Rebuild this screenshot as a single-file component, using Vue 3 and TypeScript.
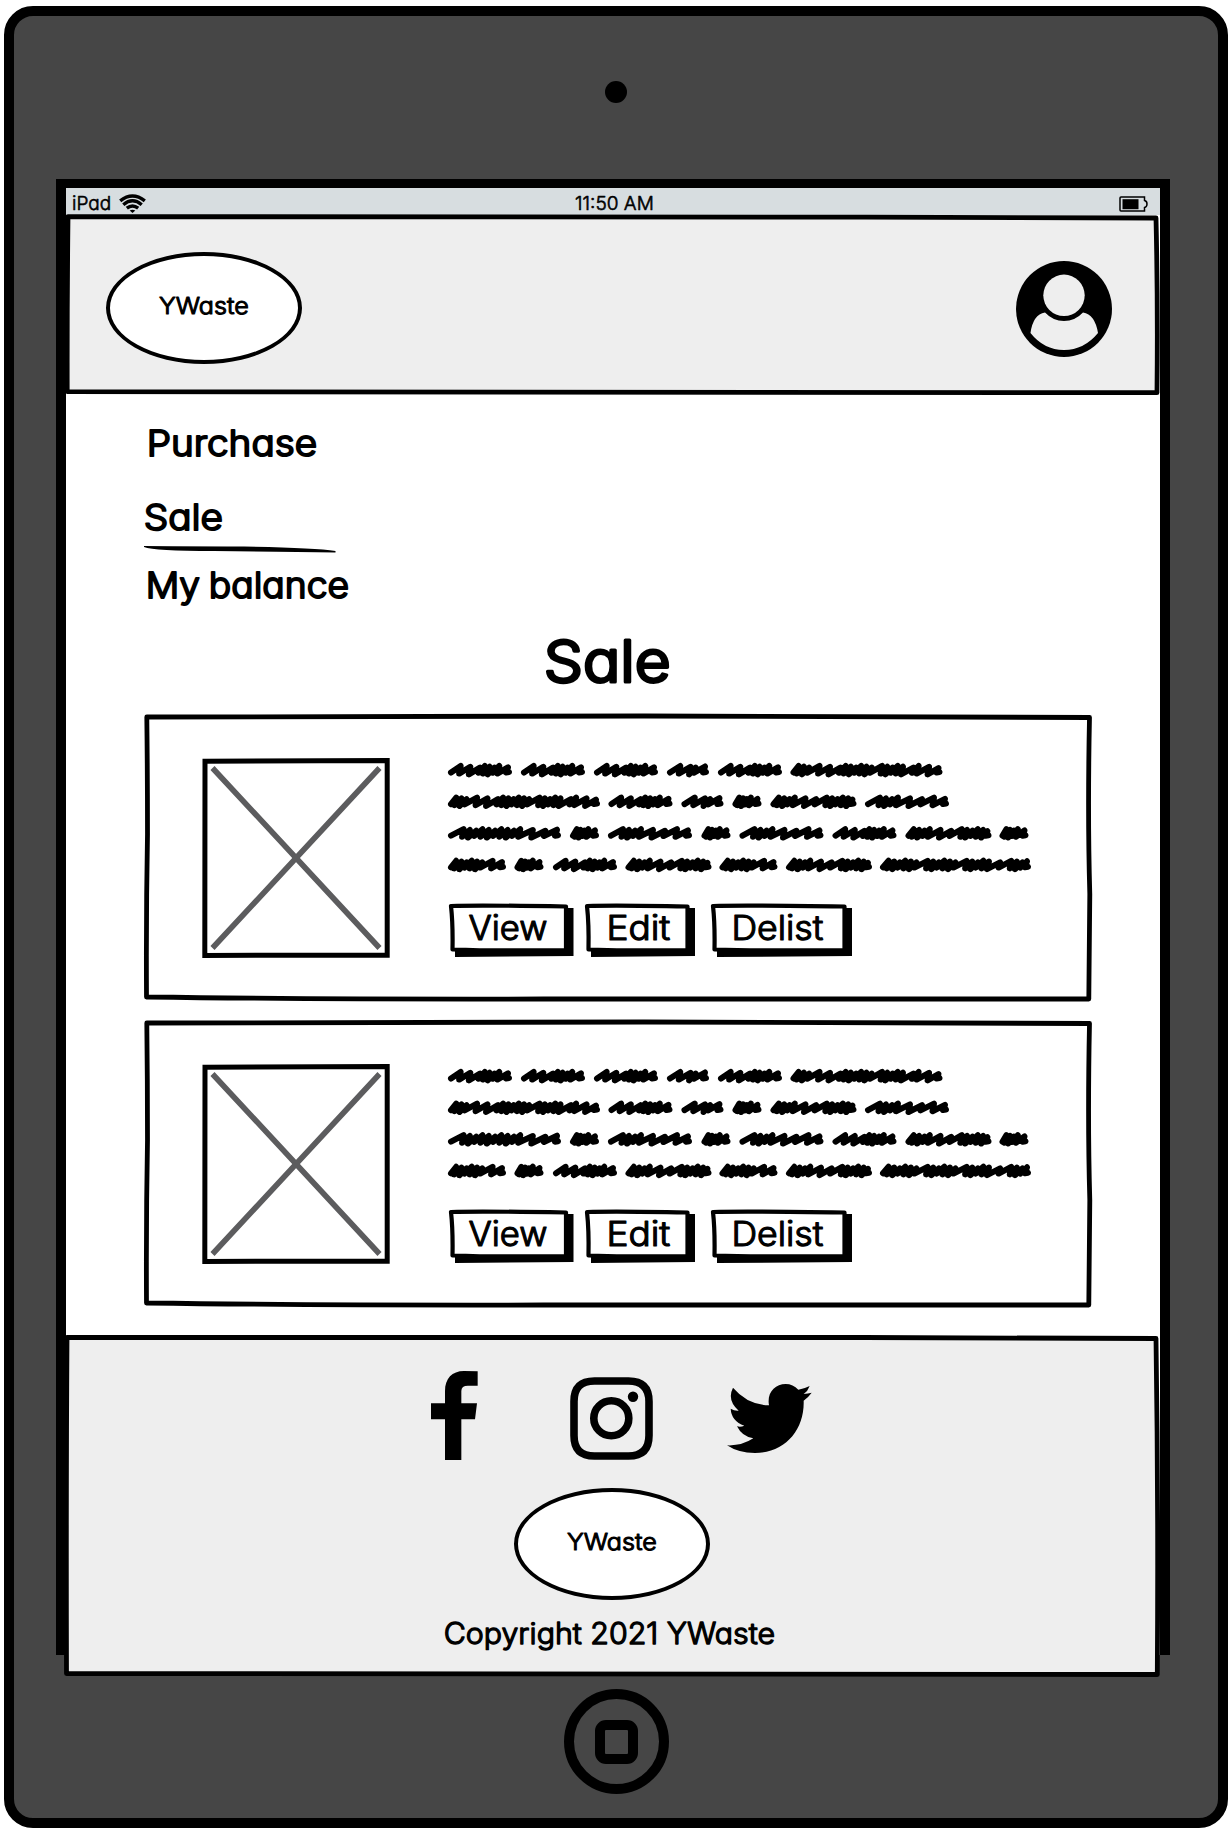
<script setup lang="ts">
import { h } from 'vue'
import type { FunctionalComponent } from 'vue'

interface LetteringProps {
  text: string
  size: number
  width: number
  ink: number
}

// A line of marker lettering: its box is the cap height by the inked width.
// A light face under a round-joined stroke gives the soft pen ends.
const Lettering: FunctionalComponent<LetteringProps> = (props) => {
  const cap = props.size * 0.727
  const fontSize = (cap - props.ink) / 0.727
  const bearing = fontSize * 0.065 - props.ink / 2
  return h(
    'svg',
    {
      width: props.width,
      height: Math.round(cap),
      style: 'display:block;overflow:visible;flex:none',
    },
    [
      h(
        'text',
        {
          x: -bearing,
          y: Math.round(cap) - props.ink / 2,
          'font-size': fontSize,
          textLength: props.width + bearing * 1.8,
          lengthAdjust: 'spacingAndGlyphs',
          fill: '#000',
          stroke: '#000',
          'stroke-width': props.ink,
          'stroke-linejoin': 'round',
        },
        props.text,
      ),
    ],
  )
}
Lettering.props = ['text', 'size', 'width', 'ink']

// Scribbled words: w is an open slash, n a tight one.
type Word = [x: number, width: number, shape: string]

const A = 'wwwnnnnw'
const B = 'wwnw'
const C = 'nnnwwwnnnnnnwnnnnwnww'
const D = 'nnnnw'
const E = 'nnnnwwwnnnnn'
const F = 'wnnnwwww'
const G = 'wnnnnnnnnnwww'
const H = 'nnnnnnww'
const L = 'nnnnnnwnnnnnwnnnnwwnnn'

const lines: Word[][] = [
  [[0, 64, A], [73, 64, A], [146, 64, A], [219, 42, B], [270, 64, A], [342.5, 152, C]],
  [[0, 152, C], [160.5, 64, A], [233.5, 42, B], [284.5, 29, D], [322.5, 86, E], [417, 84, F]],
  [[0, 113, G], [122, 29, D], [160, 84, F], [253.5, 29, D], [291.5, 84, F], [384.5, 64, A], [457.5, 86, E], [551.5, 29, D]],
  [[0, 58, H], [66.5, 29, D], [105, 64, A], [177.5, 86, E], [271.5, 58, H], [338, 86, E], [432, 151, L]],
]

function scribble([x, width, shape]: Word, row: number): string {
  const units = [...shape].map((c) => (c === 'w' ? 10 : 5))
  const total = units.reduce((sum, u) => sum + u, 0)
  const scale = (width - 6) / total
  const base = 7 + row * 31.6
  let cursor = x + 3
  let d = `M${cursor} ${base + 2.5}`
  units.forEach((unit, i) => {
    const step = unit * scale
    const top = base - 4 + (i % 3) * 0.8
    const bottom = base + 2.8 + ((i + 1) % 3) * 0.8
    cursor += step
    if (i === units.length - 1) {
      d += `L${cursor - 1} ${top + 0.5}L${cursor - 3} ${base + 2.5}L${cursor} ${base + 2}`
    } else {
      d += `L${cursor} ${top}L${cursor - (unit > 5 ? 1.5 : 2)} ${bottom}`
    }
  })
  return d
}

const scribbles: string[] = lines.flatMap((line, row) => line.map((word) => scribble(word, row)))

const listings = [{ id: 1 }, { id: 2 }]
const actions = [
  { label: 'View', box: 119.5, width: 76, gap: 16.5, pad: 21 },
  { label: 'Edit', box: 105, width: 61, gap: 20.5, pad: 22.5 },
  { label: 'Delist', box: 136, width: 89, gap: 0, pad: 22.5 },
]
</script>

<template>
  <div class="device">
    <div class="camera"></div>
    <div class="screen">
      <div class="status">
        <div class="carrier">
          <Lettering text="iPad" :size="20" :width="37.500" :ink="0.6" />
          <svg class="wifi" viewBox="0 0 27 19" width="27" height="19">
            <g fill="none" stroke="#000" stroke-width="3.400">
              <path d="M1.2 6.8Q13.5-3 25.8 6.8" />
              <path d="M4.3 10.700Q13.5 3 22.7 10.700" />
              <path d="M7.8 14.200Q13.5 9.700 19.2 14.200" />
            </g>
            <path d="M10.7 16.500Q13.5 15 16.3 16.500L13.5 19Z" />
          </svg>
        </div>
        <Lettering class="clock" text="11:50 AM" :size="20" :width="77" :ink="0.6" />
        <div class="power">
          <svg viewBox="0 0 29 16" width="29" height="16">
            <path d="M2 1H25.5V4.5Q28 5 28 8T25.5 11.5V15H2Q1 15 1 14V2Q1 1 2 1Z" fill="none" stroke="#000" stroke-width="1.5" />
            <rect x="3.5" y="3.2" width="16" height="10" />
          </svg>
        </div>
      </div>

      <header class="topbar">
        <svg class="outline" width="1094" height="180" viewBox="0 0 1094 180">
          <path d="M2 1.600Q400 2.500 800 2.200L1090 3Q1092 90 1091 177.700Q540 178.800 1.200 176.600Q1 90 2 1.600Z" />
        </svg>
        <div class="logo"><Lettering text="YWaste" :size="25" :width="88" :ink="1.100" /></div>
        <svg class="avatar" viewBox="0 0 96 96" width="96" height="96">
          <circle cx="48" cy="48" r="48" />
          <g fill="#eee">
            <circle cx="48" cy="34.3" r="20.7" />
            <path d="M14.500 72Q17 53.500 29 51.500Q37 60 48 60T67 51.500Q79 53.500 82 72Q68 89 48 89T14.500 72Z" />
          </g>
        </svg>
      </header>

      <main class="content">
        <nav class="menu">
          <Lettering class="purchase" text="Purchase" :size="38" :width="168" :ink="1.900" />
          <Lettering class="sale" text="Sale" :size="38" :width="77" :ink="1.900" />
          <svg class="underline" width="192" height="8" viewBox="0 0 192 8">
            <path d="M0 0Q30 .2 100 .5Q170 1.500 191.500 5L191.500 6.500Q140 6 70 5Q10 5 0 1Z" />
          </svg>
          <Lettering class="balance" text="My balance" :size="38" :width="201" :ink="1.900" />
        </nav>

        <h1 class="title"><Lettering text="Sale" :size="62" :width="123" :ink="3.200" /></h1>

        <section class="cards">
          <article v-for="item in listings" :key="item.id" class="card">
            <svg class="outline" width="948" height="288" viewBox="0 0 948 288">
              <path d="M2.800 3Q300 2 500 2Q750 2.500 945.500 3.500Q943.500 100 945.800 180L944.800 285Q600 286 400 285Q180 285.500 2.500 283Q2 200 3.500 120Q3.500 60 2.800 3Z" />
            </svg>
            <svg class="photo" width="188" height="200" viewBox="0 0 188 200">
              <path d="M10.500 10L177.500 190M177.500 10L10.500 190" fill="none" stroke="#5c5c5e" stroke-width="5.600" />
              <path d="M3 3.200L185.200 2.600V197.200L2.800 197.400Z" fill="none" stroke="#000" stroke-width="5" />
            </svg>
            <div class="details">
              <svg class="scribbles" width="584" height="112" viewBox="0 0 584 112">
                <path v-for="(d, i) in scribbles" :key="i" :d="d" />
              </svg>
              <div class="actions">
                <button
                  v-for="action in actions"
                  :key="action.label"
                  type="button"
                  class="action"
                  :style="{ width: action.box + 'px', marginRight: action.gap + 'px', paddingLeft: action.pad + 'px' }"
                >
                  <svg class="outline" :width="action.box" height="50" :viewBox="`0 0 ${action.box} 50`">
                    <path :d="`M6 4H${action.box + 5}V52L6 53V47H${action.box - 4}V4Z`" fill="#000" stroke="none" />
                    <path
                      :d="`M2 2Q30 1 ${action.box - 2.5} 2.5V46Q50 47 3.500 45.5Q4 20 2 2Z`"
                      fill="#fff"
                      stroke-width="4.200"
                    />
                  </svg>
                  <Lettering class="caption" :text="action.label" :size="36" :width="action.width" :ink="1.200" />
                </button>
              </div>
            </div>
          </article>
        </section>
      </main>

      <footer class="footer">
        <svg class="outline" width="1096" height="341" viewBox="0 0 1096 341">
          <path d="M3 1.500Q500 2 800 1.500L1092 2.500Q1094.500 170 1093.300 338.500Q540 340 2.500 337.500Q2 160 3 1.500Z" />
        </svg>
        <div class="socials">
          <svg class="facebook" viewBox="63 62 141 267" width="47" height="89">
            <path d="M105 329V207H63V159H105V122C105 85 126 62 162 62L203 63V106H174Q154 106 154 122V159H201L195 207H154V329Z" />
          </svg>
          <svg class="instagram" viewBox="0 0 83 83" width="83" height="83">
            <g fill="none" stroke="#000" stroke-width="7.600">
              <path d="M24.500 4H58.500Q79 4 79 24.500V58.500Q79 79 58.500 79H24.500Q4 79 4 58.500V24.500Q4 4 24.500 4Z" />
              <circle cx="41.300" cy="41.300" r="17.500" />
            </g>
            <circle cx="63" cy="19.700" r="5.200" />
          </svg>
          <svg class="twitter" viewBox="951 102 255 207" width="85" height="69">
            <path
              d="M951 286Q995 288 1030 265Q996 260 981 229Q992 232 1003 227Q964 213 962 176Q973 183 986 182Q950 150 969 113Q1012 164 1077 166C1070 128 1095 102 1127 102Q1149 102 1165 119Q1184 116 1199 108Q1194 123 1181 132Q1194 131 1205 128Q1195 142 1181 152C1184 240 1125 309 1035 309Q985 309 951 286Z"
            />
          </svg>
        </div>
        <div class="logo"><Lettering text="YWaste" :size="25" :width="88" :ink="1.100" /></div>
        <Lettering class="copyright" text="Copyright 2021 YWaste" :size="31" :width="329" :ink="1.300" />
      </footer>
    </div>
    <div class="home"><div class="home-mark"></div></div>
  </div>
</template>

<style>
body {
  margin: 0;
  background: #fff;
}
</style>

<style scoped>
.device {
  box-sizing: border-box;
  display: flex;
  flex-direction: column;
  width: 1224px;
  height: 1822px;
  margin: 6px 4px 4px;
  border: 10px solid #000;
  border-radius: 29px;
  background: #464646;
  font-family: Inter, 'Open Sans', sans-serif;
  font-weight: 300;
  font-feature-settings: 'cv11', 'ss03';
}
.camera {
  width: 22px;
  height: 22px;
  margin: 65px auto 76px;
  border-radius: 50%;
  background: #000;
}
.screen {
  box-sizing: border-box;
  display: flex;
  flex: none;
  flex-direction: column;
  width: 1114px;
  height: 1476px;
  margin-left: 42px;
  border: solid #000;
  border-width: 9px 10px 0;
  background: #fff;
}
.status {
  display: grid;
  flex: none;
  grid-template-columns: 1fr auto 1fr;
  align-items: center;
  box-sizing: border-box;
  height: 27px;
  padding: 1px 12px 0 6.5px;
  background: #d7dde0;
}
.carrier {
  display: flex;
  align-items: center;
  gap: 9px;
}
.wifi {
  margin-top: 2px;
}
.clock {
  margin: 0 0 0 9px;
}
.power {
  display: flex;
  justify-content: flex-end;
  margin-top: 3px;
}
.outline {
  position: absolute;
  top: 0;
  left: 0;
  overflow: visible;
  fill: none;
  stroke: #000;
  stroke-width: 4.8;
  stroke-linejoin: round;
}
.topbar {
  position: relative;
  display: flex;
  flex: none;
  justify-content: space-between;
  box-sizing: border-box;
  height: 180px;
  padding: 37px 48px 0 40px;
}
.topbar .outline,
.footer .outline {
  fill: #eee;
}
.logo {
  position: relative;
  display: flex;
  align-items: center;
  justify-content: center;
  box-sizing: border-box;
  width: 196px;
  height: 112px;
  padding-bottom: 4px;
  border: 4px solid #000;
  border-radius: 50%;
  background: #fff;
}
.avatar {
  position: relative;
  margin-top: 9px;
}
.content {
  flex: none;
  box-sizing: border-box;
  height: 941px;
  padding: 34px 67px 0 78px;
}
.menu {
  display: flex;
  flex-direction: column;
}
.purchase {
  margin-left: 4px;
}
.sale {
  margin: 46px 0 15px 1px;
}
.underline {
  margin-bottom: 17px;
}
.balance {
  margin-left: 3px;
  word-spacing: -0.1em;
}
.title {
  display: flex;
  margin: 40px 0 0 402px;
  font-weight: inherit;
}
.cards {
  display: flex;
  flex-direction: column;
  gap: 18px;
  margin-top: 30px;
}
.card {
  position: relative;
  display: flex;
  gap: 58px;
  box-sizing: border-box;
  height: 288px;
  padding: 43.5px 0 0 58px;
}
.photo {
  flex: none;
}
.scribbles {
  display: block;
  overflow: visible;
  margin: 5.5px 0 0;
  fill: none;
  stroke: #000;
  stroke-width: 6;
  stroke-linecap: round;
  stroke-linejoin: round;
}
.actions {
  display: flex;
  margin: 29px 0 0 1px;
}
.action {
  position: relative;
  display: flex;
  align-items: flex-start;
  box-sizing: border-box;
  height: 50px;
  padding: 10.5px 0 0;
  border: 0;
  background: none;
  font: inherit;
  font-feature-settings: inherit;
}
.caption {
  position: relative;
}
.footer {
  position: relative;
  display: flex;
  flex: none;
  flex-direction: column;
  align-items: center;
  box-sizing: border-box;
  width: 1096px;
  height: 341px;
  margin-left: -2px;
  padding-top: 35px;
}
.socials {
  position: relative;
  display: flex;
  align-items: flex-end;
  height: 89px;
  margin-left: 19px;
}
.instagram {
  margin: 0 74px 0 92px;
}
.twitter {
  margin-bottom: 7px;
}
.footer .logo {
  flex: none;
  margin: 28px 0 22px;
}
.copyright {
  position: relative;
  margin-right: 5px;
}
.home {
  display: flex;
  flex: none;
  align-items: center;
  justify-content: center;
  box-sizing: border-box;
  width: 105px;
  height: 105px;
  margin: 34px auto 0;
  border: 10px solid #000;
  border-radius: 50%;
}
.home-mark {
  box-sizing: border-box;
  width: 43px;
  height: 44px;
  border: 10px solid #000;
  border-radius: 11px;
}
</style>
